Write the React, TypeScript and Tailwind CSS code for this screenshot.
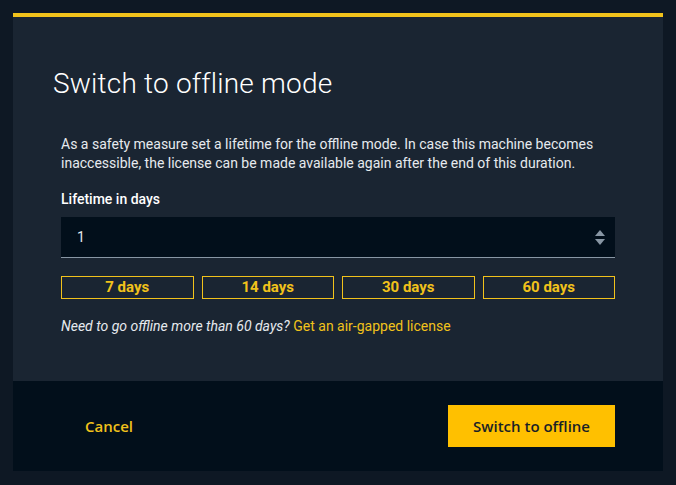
import React from 'react';

export default function App() {
  const presets = ['7 days', '14 days', '30 days', '60 days'];

  return (
    <div className="w-[676px] h-[485px] bg-[#0e1824] p-[13px] font-['Roboto',sans-serif]">
      <div className="w-[650px] h-[458px] flex flex-col border-t-4 border-[#f1c21b] bg-[#1a2532]">
        <div className="flex-1 px-12 pt-[50px]">
          <h1 className="ml-[-8px] text-[28px] leading-[34px] font-light text-white tracking-[0.2px]">
            Switch to offline mode
          </h1>

          <p className="mt-[34px] text-[14px] leading-[19px] text-[#e6eaee]">
            As a safety measure set a lifetime for the offline mode. In case this machine becomes
            inaccessible, the license can be made available again after the end of this duration.
          </p>

          <div className="mt-[16px] text-[14px] leading-[20px] font-medium text-white">Lifetime in days</div>

          <div className="mt-[8px] h-[41px] flex items-center justify-between bg-[#020f1b] border-b border-[#8896a4] pl-4 pr-[10px]">
            <span className="text-[14px] text-[#e6eaee]">1</span>
            <div className="flex flex-col gap-[3px]">
              <svg width="10" height="6" viewBox="0 0 10 6"><path d="M5 0L10 6H0z" fill="#8896a4" /></svg>
              <svg width="10" height="6" viewBox="0 0 10 6"><path d="M0 0h10L5 6z" fill="#8896a4" /></svg>
            </div>
          </div>

          <div className="mt-[18px] grid grid-cols-4 gap-2">
            {presets.map((p) => (
              <button
                key={p}
                className="h-[23px] border border-[#f1c21b] text-[#f1c21b] text-[15px] font-bold leading-none flex items-center justify-center"
              >
                {p}
              </button>
            ))}
          </div>

          <p className="mt-[17px] text-[14px] leading-[20px] text-[#e6eaee]">
            <span className="italic">Need to go offline more than 60 days?</span>{' '}
            <span className="text-[#f1c21b]">Get an air-gapped license</span>
          </p>
        </div>

        <div className="h-[90px] bg-[#020f1b] flex items-center justify-between pl-[72px] pr-12 font-['Open_Sans',sans-serif]">
          <button className="text-[15px] font-semibold text-[#f1c21b]">Cancel</button>
          <button className="w-[167px] h-[42px] bg-[#ffc000] text-[15px] font-semibold text-[#1a1f26]">
            Switch to offline
          </button>
        </div>
      </div>
    </div>
  );
}
